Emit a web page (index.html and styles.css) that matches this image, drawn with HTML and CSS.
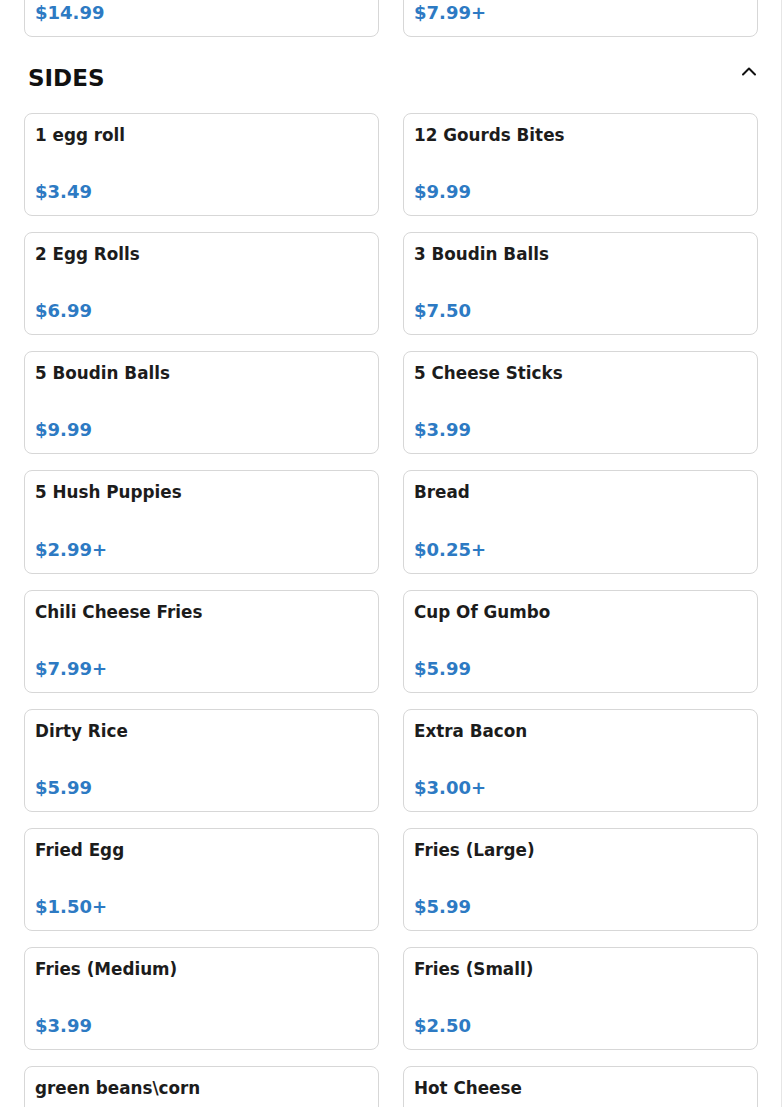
FILE: index.html
```html
<!DOCTYPE html>
<html lang="en">
<head>
<meta charset="utf-8">
<title>Menu - Sides</title>
<link rel="stylesheet" href="styles.css">
</head>
<body>
<div class="page">
  <div class="grid prev-grid">
    <div class="card"><div class="name">&nbsp;</div><div class="price">$14.99</div></div>
    <div class="card"><div class="name">&nbsp;</div><div class="price">$7.99+</div></div>
  </div>

  <section class="section">
    <div class="section-head">
      <h2 class="section-title">SIDES</h2>
      <button class="toggle" aria-label="Collapse">
        <svg width="20" height="20" viewBox="0 0 20 20" aria-hidden="true"><polyline points="4,13.5 10,7.5 16,13.5" fill="none" stroke="#111" stroke-width="2" stroke-linecap="round" stroke-linejoin="round"/></svg>
      </button>
    </div>
    <div class="grid">
      <div class="card"><div class="name">1 egg roll</div><div class="price">$3.49</div></div>
      <div class="card"><div class="name">12 Gourds Bites</div><div class="price">$9.99</div></div>
      <div class="card"><div class="name">2 Egg Rolls</div><div class="price">$6.99</div></div>
      <div class="card"><div class="name">3 Boudin Balls</div><div class="price">$7.50</div></div>
      <div class="card"><div class="name">5 Boudin Balls</div><div class="price">$9.99</div></div>
      <div class="card"><div class="name">5 Cheese Sticks</div><div class="price">$3.99</div></div>
      <div class="card"><div class="name">5 Hush Puppies</div><div class="price">$2.99+</div></div>
      <div class="card"><div class="name">Bread</div><div class="price">$0.25+</div></div>
      <div class="card"><div class="name">Chili Cheese Fries</div><div class="price">$7.99+</div></div>
      <div class="card"><div class="name">Cup Of Gumbo</div><div class="price">$5.99</div></div>
      <div class="card"><div class="name">Dirty Rice</div><div class="price">$5.99</div></div>
      <div class="card"><div class="name">Extra Bacon</div><div class="price">$3.00+</div></div>
      <div class="card"><div class="name">Fried Egg</div><div class="price">$1.50+</div></div>
      <div class="card"><div class="name">Fries (Large)</div><div class="price">$5.99</div></div>
      <div class="card"><div class="name">Fries (Medium)</div><div class="price">$3.99</div></div>
      <div class="card"><div class="name">Fries (Small)</div><div class="price">$2.50</div></div>
      <div class="card"><div class="name">green beans\corn</div><div class="price">$3.99</div></div>
      <div class="card"><div class="name">Hot Cheese</div><div class="price">$1.00</div></div>
    </div>
  </section>
</div>
</body>
</html>
```

FILE: styles.css
```css
html, body {
  margin: 0;
  padding: 0;
  background: #ffffff;
}

body {
  font-family: "DejaVu Sans", "Noto Sans", sans-serif;
  color: #1c1c1c;
  overflow: hidden;
}

.page {
  box-sizing: border-box;
  min-height: 1107px;
  padding: 0 23px 0 24px;
  border-right: 1px solid #e6e6e6;
}

.grid {
  display: grid;
  grid-template-columns: 1fr 1fr;
  column-gap: 24px;
  row-gap: 16px;
}

.prev-grid {
  margin-top: -66px;
}

.card {
  box-sizing: border-box;
  height: 103.125px;
  display: flex;
  flex-direction: column;
  padding: 10px 10px 11px 10px;
  border: 1px solid #d7d7d7;
  border-radius: 8px;
  background: #fff;
}

.name {
  font-size: 16.8px;
  font-weight: 700;
  line-height: 22px;
  color: #1c1c1c;
  white-space: nowrap;
}

.price {
  margin-top: auto;
  font-size: 18px;
  font-weight: 700;
  line-height: 24px;
  color: #2d7ac3;
}

.section-head {
  display: flex;
  justify-content: space-between;
  align-items: flex-start;
  padding: 24px 0 17.4px 4px;
}

.section-title {
  margin: 1px 0 0 0;
  font-size: 23px;
  line-height: 33.6px;
  font-weight: 700;
  color: #111;
}

.toggle {
  width: 20px;
  height: 20px;
  padding: 0;
  margin: 0 -1px 0 0;
  border: 0;
  background: none;
  display: flex;
}
```
